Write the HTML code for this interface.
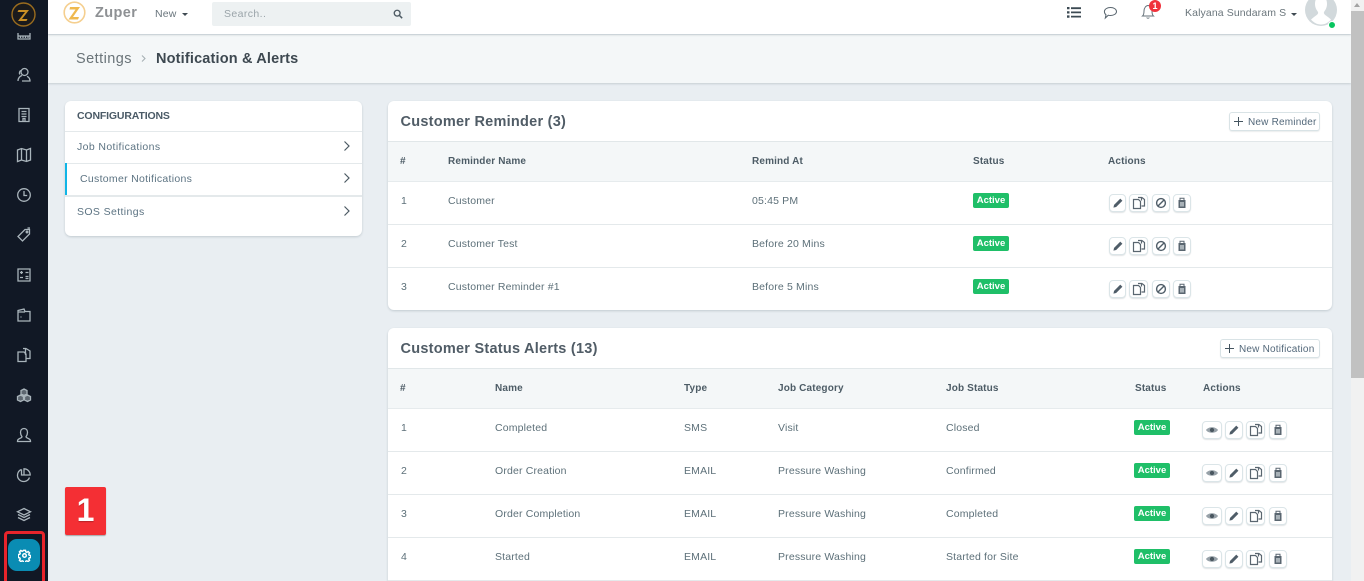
<!DOCTYPE html>
<html lang="en">
<head>
<meta charset="utf-8">
<title>Notification &amp; Alerts</title>
<style>
*{box-sizing:border-box}
html,body{margin:0;padding:0;width:1364px;height:581px;overflow:hidden;background:#e9eef2;font-family:"Liberation Sans",sans-serif}
#root{position:relative;width:1364px;height:581px;overflow:hidden;background:#e9eef2}
.a{position:absolute}
.t{position:absolute;white-space:nowrap;font-size:10.5px;line-height:14px;letter-spacing:.16px;color:#5d7079}
.th{position:absolute;white-space:nowrap;font-size:10px;line-height:14px;letter-spacing:.15px;font-weight:bold;color:#4d5c66}
.card{position:absolute;background:#fff;border-radius:6px;box-shadow:0 1px 2px rgba(60,80,90,.22);overflow:hidden}
.line{position:absolute;height:1px;background:#e4e9eb}
.badge{position:absolute;width:36px;height:15px;background:#1fbf68;border-radius:2px;color:#fff;font-size:9.5px;font-weight:bold;line-height:16px;text-align:center;letter-spacing:0}
.b{position:absolute;height:18px;background:#fff;border:1px solid #dbe5e8;border-radius:4px;box-shadow:0 1px 1px rgba(60,80,90,.15)}
.b svg{position:absolute;left:50%;top:50%;transform:translate(-50%,-50%)}
.side svg{position:absolute;left:16px;width:16px;height:16px;fill:none;stroke:#a9b4bb;stroke-width:1.3}
.nb{position:absolute;background:#fff;border:1px solid #d9e3e6;border-radius:3px;height:19px;color:#53687a;font-size:10px;line-height:19px;letter-spacing:.2px;box-shadow:0 1px 1px rgba(60,80,90,.1)}
</style>
</head>
<body>
<div id="root">
<svg width="0" height="0" style="position:absolute">
<defs>
<symbol id="pen" viewBox="0 0 12 12"><path d="M1 11l.7-3L8.500 1.200l2.300 2.300L4 10.300z" fill="#4f5d68"/></symbol>
<symbol id="copy" viewBox="0 0 14 14"><path d="M1.500 3.500h5l2 2v7h-7zM6 1.500h3.500v3M10 1.500l2.500 2v6.500h-3" fill="none" stroke="#5a6670" stroke-width="1.200"/></symbol>
<symbol id="ban" viewBox="0 0 12 12"><circle cx="6" cy="6" r="4.400" fill="none" stroke="#4f5d68" stroke-width="1.400"/><path d="M3 9l6-6" stroke="#4f5d68" stroke-width="1.400"/></symbol>
<symbol id="trash" viewBox="0 0 12 12"><path d="M2.500 3h7v8h-7z" fill="#5a6670"/><path d="M4 3V1.300h4V3" fill="none" stroke="#5a6670"/><path d="M4 5h4v4.500H4z" fill="#a9b2b8"/></symbol>
<symbol id="eye" viewBox="0 0 14 10"><path d="M.5 5C3 1 11 1 13.500 5 11 9 3 9 .5 5z" fill="#98a2a9"/><circle cx="7" cy="5" r="2.300" fill="#4a5760"/></symbol>
</defs>
</svg>

<!-- content background -->
<div class="a" style="left:48px;top:35px;width:1303px;height:48px;background:#f4f7f8;box-shadow:0 1px 2px rgba(60,80,90,.2)"></div>
<div class="t" style="left:76px;top:50px;font-size:14.500px;line-height:18px;letter-spacing:.45px;color:#6a7479">Settings</div>
<svg class="a" style="left:140px;top:54px" width="7" height="9" viewBox="0 0 7 9"><path d="M2 1.500l3 3-3 3" fill="none" stroke="#a8b0b4" stroke-width="1.100"/></svg>
<div class="t" style="left:156px;top:50px;font-size:14.500px;line-height:18px;letter-spacing:.17px;font-weight:bold;color:#3d4850">Notification &amp; Alerts</div>

<!-- top bar -->
<div class="a" style="left:48px;top:0;width:1303px;height:34px;background:#fff;box-shadow:0 1px 2px rgba(60,80,90,.22)"></div>
<svg class="a" style="left:63px;top:1px" width="24" height="24" viewBox="0 0 24 24"><circle cx="11.500" cy="11.500" r="10.300" fill="#fff" stroke="#f5cf8f" stroke-width="1.600"/><path d="M7 6h10l-7 10h6l-1 2.500H5.500L12.500 8.500H6.500z" fill="#efb94f"/></svg>
<div class="t" style="left:95px;top:3px;font-size:14.500px;line-height:20px;font-weight:bold;letter-spacing:.4px;color:#8e9194">Zuper</div>
<div class="t" style="left:155px;top:7px;font-size:10.500px;color:#69757c">New</div>
<div class="a" style="left:182px;top:13px;width:0;height:0;border:3px solid transparent;border-top:3px solid #3f4a52;border-bottom:0"></div>
<div class="a" style="left:212px;top:2px;width:199px;height:24px;background:#edf1f2;border-radius:2px"></div>
<div class="t" style="left:224px;top:7px;color:#9aa4a9;letter-spacing:.4px">Search..</div>
<svg class="a" style="left:393px;top:9px" width="10" height="10" viewBox="0 0 12 12"><circle cx="5" cy="5" r="3.500" fill="none" stroke="#4d5a63" stroke-width="1.600"/><path d="M7.800 7.800L11 11" stroke="#4d5a63" stroke-width="1.800"/></svg>

<svg class="a" style="left:1067px;top:6px" width="14" height="13" viewBox="0 0 14 13"><path d="M0 1h2.500v2.300H0zM0 5.200h2.500v2.300H0zM0 9.400h2.500v2.300H0zM4 1.300h10v1.800H4zM4 5.500h10v1.800H4zM4 9.700h10v1.800H4z" fill="#3c4a53"/></svg>
<svg class="a" style="left:1103px;top:6px" width="15" height="14" viewBox="0 0 15 14"><path d="M7.500 1.500c3.300 0 6 1.700 6 4s-2.700 4-6 4c-.8 0-1.500-.1-2.200-.3L2.300 12l.7-3.200c-1-.7-1.600-1.900-1.600-3.300 0-2.300 2.800-4 6.100-4z" fill="none" stroke="#58656e" stroke-width="1"/></svg>
<svg class="a" style="left:1141px;top:3px" width="15" height="16" viewBox="0 0 15 16"><path d="M1.500 13c1.200-1 1.500-2 1.500-5C3 5 5 2.500 7 2.500S11 5 11 8c0 3 .3 4 1.500 5zM5.700 14.500c.4 1 2.200 1 2.600 0" fill="none" stroke="#66727a" stroke-width="1"/></svg>
<div class="a" style="left:1149px;top:0;width:12px;height:12px;background:#f0323c;border-radius:50%;color:#fff;font-size:9px;font-weight:bold;line-height:12px;text-align:center">1</div>
<div class="t" style="left:1185px;top:6px;font-size:10.500px;letter-spacing:.11px;color:#6b767c">Kalyana Sundaram S</div>
<div class="a" style="left:1291px;top:13px;width:0;height:0;border:3px solid transparent;border-top:3px solid #3f4a52;border-bottom:0"></div>
<svg class="a" style="left:1305px;top:0" width="33" height="28" viewBox="0 0 33 28"><circle cx="16" cy="10" r="16" fill="#d2d9dc"/><path d="M16 -4c4 0 6 3.500 6 8 0 4-2 6.500-3 8-.6 2 1 3 4 5l3 2.500c-2.500 3-6 5-10 5s-7.500-2-10-5L9 17c3-2 4.600-3 4-5-1-1.500-3-4-3-8 0-4.500 2-8 6-8z" fill="#fff"/></svg>
<div class="a" style="left:1328px;top:21px;width:8px;height:8px;background:#08c55f;border-radius:50%;border:1px solid #fff"></div>

<!-- scrollbar -->
<div class="a" style="left:1351px;top:0;width:13px;height:581px;background:#f1f1f1"></div>
<div class="a" style="left:1351px;top:11px;width:13px;height:367px;background:#c1c1c1"></div>
<div class="a" style="left:1354px;top:3px;width:0;height:0;border:3.500px solid transparent;border-bottom:4px solid #a3a3a3;border-top:0"></div>

<!-- sidebar -->
<div class="a side" style="left:0;top:0;width:48px;height:581px;background:#111825;overflow:hidden">
<svg style="top:26px" viewBox="0 0 16 16"><path d="M2 1h12v12H2zM2 10h12M4.500 12V9.500M7 12V9.500M9.500 12V9.500M12 12V9.500"/></svg>
<svg style="top:67px" viewBox="0 0 16 16"><circle cx="8.500" cy="5" r="3.500"/><path d="M2 14c0-3 2-5 4-5.500M6 14h8c0-2.500-1.500-4-3-4.700M5 3.500C3.500 4 3 6 3.800 7.500"/></svg>
<svg style="top:107px" viewBox="0 0 16 16"><path d="M3 1.500h10v13H3zM5.500 4.500h5M5.500 7h5M5.500 9.500h5M7 14v-2.500h2V14"/></svg>
<svg style="top:147px" viewBox="0 0 16 16"><path d="M1.500 3l4-1.500 5 1.500 4-1.500V13l-4 1.500-5-1.500-4 1.500zM5.500 1.500V13M10.500 3v11.500"/></svg>
<svg style="top:187px" viewBox="0 0 16 16"><circle cx="8" cy="8" r="6.300"/><path d="M8 4v4.500h3.200"/></svg>
<svg style="top:227px" viewBox="0 0 16 16"><path d="M9 2.500h4.500V7l-7 7L2 9.500zM11.500 1l2.500 0"/><circle cx="11" cy="5" r=".8"/></svg>
<svg style="top:267px" viewBox="0 0 16 16"><path d="M2 2h12v12H2zM4 5.500h3M5.500 4v3M9.500 5.500h3M4 10.500h3M9.500 9.500h3M9.500 11.500h3"/></svg>
<svg style="top:307px" viewBox="0 0 16 16"><path d="M2 5V3.500L8 2l1 2.500h5V14H2zM2 5h7M4.500 10h1"/></svg>
<svg style="top:347px" viewBox="0 0 16 16"><path d="M2 5h6l2 2v7.500H2zM7 1.500h2.500V8M10 1.500l4 2.500v7.500h-3.500"/></svg>
<svg style="top:387px" viewBox="0 0 16 16"><path d="M8 2l3 1.500V7L8 8.500 5 7V3.500zM4.500 8L7.500 9.500V13l-3 1.500-3-1.500V9.500zM11.500 8l3 1.500V13l-3 1.500-3-1.500V9.500z" fill="#a9b4bb" fill-opacity=".5"/></svg>
<svg style="top:427px" viewBox="0 0 16 16"><path d="M8 1.500c2.300 0 3.500 1.800 3.500 4 0 2-1 3.500-1.500 4.200 0 1 2 1.500 3.500 2.500.8.500 1 1.300 1 2.300h-13c0-1 .2-1.800 1-2.300C4 11.200 6 10.700 6 9.700 5.500 9 4.500 7.500 4.500 5.500c0-2.200 1.200-4 3.500-4z"/></svg>
<svg style="top:467px" viewBox="0 0 16 16"><path d="M5.500 2.500a6.200 6.200 0 1 0 8 8M8 1.800a6.200 6.200 0 0 1 6.200 6.200H8zM5.500 2.500V8H8"/></svg>
<svg style="top:507px" viewBox="0 0 16 16"><path d="M8 1.500l6.500 3.300L8 8 1.500 4.800zM2 7.500L8 10.500l6-3M2 10.500L8 13.500l6-3"/></svg>
<div class="a" style="left:8px;top:539px;width:32px;height:32px;background:#0a8cb3;border-radius:9px"></div>
<svg style="left:18px;top:549px;width:13px;height:13px;stroke:#fff;stroke-width:1.800" viewBox="0 0 16 16"><circle cx="8" cy="8" r="2.200"/><path d="M6.800 1.700h2.400l.4 1.800 1.300.6 1.600-1 1.700 1.700-1 1.600.6 1.300 1.800.4v2.400l-1.800.4-.6 1.300 1 1.600-1.700 1.700-1.600-1-1.300.6-.4 1.800H6.800l-.4-1.800-1.300-.6-1.600 1-1.700-1.700 1-1.600-.6-1.300-1.800-.4V6.800l1.800-.4.6-1.300-1-1.600 1.700-1.700 1.600 1 1.300-.6z"/></svg>
<div class="a" style="left:0;top:0;width:48px;height:33px;background:#111825"></div>
<svg class="a" style="left:11px;top:2px;width:26px;height:26px;stroke:none" viewBox="0 0 26 26"><circle cx="12.500" cy="12.500" r="11.500" fill="#1a1a1c" stroke="#9a6c1e" stroke-width="1.400"/><path d="M7.500 8h10.500l-7 9h5.500l-1 2H7l7-9H6.500z" fill="#c98f25"/></svg>
</div>

<div class="a" style="left:4px;top:531px;width:41px;height:60px;border:3px solid #e8242b;border-radius:4px"></div>
<div class="a" style="left:65px;top:487px;width:41px;height:48px;background:#f42f34;border-radius:2px;box-shadow:0 1px 1px rgba(0,0,0,.3);color:#fff;font-size:32px;font-weight:bold;line-height:46px;text-align:center;text-shadow:0 1px 1px rgba(0,0,0,.25)">1</div>

<!-- left card -->
<div class="card" style="left:65px;top:101px;width:297px;height:135px">
<div class="t" style="left:12px;top:8px;font-weight:bold;letter-spacing:-.15px;font-size:10.500px;color:#4a5a66">CONFIGURATIONS</div>
<div class="line" style="left:0;top:30px;width:297px"></div>
<div class="t" style="left:12px;top:39px;color:#5c7382;letter-spacing:.38px">Job Notifications</div>
<div class="line" style="left:0;top:62px;width:297px"></div>
<div class="a" style="left:0;top:62px;width:2px;height:33px;background:#10b5e6"></div>
<div class="t" style="left:15px;top:71px;color:#5c7382;letter-spacing:.3px">Customer Notifications</div>
<div class="line" style="left:0;top:94px;width:297px;height:2px"></div>
<div class="t" style="left:12px;top:104px;color:#5c7382;letter-spacing:.38px">SOS Settings</div>
<svg class="a" style="left:278px;top:39px" width="8" height="12" viewBox="0 0 8 12"><path d="M1.500 1.500L6 6l-4.500 4.500" fill="none" stroke="#4c5a63" stroke-width="1.200"/></svg>
<svg class="a" style="left:278px;top:71px" width="8" height="12" viewBox="0 0 8 12"><path d="M1.500 1.500L6 6l-4.500 4.500" fill="none" stroke="#4c5a63" stroke-width="1.200"/></svg>
<svg class="a" style="left:278px;top:104px" width="8" height="12" viewBox="0 0 8 12"><path d="M1.500 1.500L6 6l-4.500 4.500" fill="none" stroke="#4c5a63" stroke-width="1.200"/></svg>
</div>

<!-- card 1 -->
<div class="card" style="left:388px;top:101px;width:944px;height:209px">
<div class="t" style="left:12.500px;top:11px;font-size:14.500px;line-height:20px;font-weight:bold;letter-spacing:.25px;color:#505c66">Customer Reminder (3)</div>
<div class="nb" style="left:841px;top:11px;width:91px;padding-left:18px">New Reminder
<svg class="a" style="left:3px;top:3px" width="11" height="11" viewBox="0 0 11 11"><path d="M5.500 1v9M1 5.500h9" stroke="#44545f" stroke-width="1"/></svg></div>
<div class="a" style="left:0;top:40px;width:944px;height:41px;background:#f4f7f8;border-top:1px solid #e1e7e9;border-bottom:1px solid #e6ebed"></div>
<div class="th" style="left:12px;top:54px">#</div>
<div class="th" style="left:60px;top:54px">Reminder Name</div>
<div class="th" style="left:364px;top:54px">Remind At</div>
<div class="th" style="left:585px;top:54px">Status</div>
<div class="th" style="left:720px;top:54px">Actions</div>

<div class="t" style="left:13px;top:93px">1</div><div class="t" style="left:60px;top:93px">Customer</div><div class="t" style="left:364px;top:93px">05:45 PM</div>
<div class="badge" style="left:585px;top:92px">Active</div>
<div class="line" style="left:0;top:123px;width:944px"></div>
<div class="t" style="left:13px;top:136px">2</div><div class="t" style="left:60px;top:136px">Customer Test</div><div class="t" style="left:364px;top:136px">Before 20 Mins</div>
<div class="badge" style="left:585px;top:135px">Active</div>
<div class="line" style="left:0;top:166px;width:944px"></div>
<div class="t" style="left:13px;top:179px">3</div><div class="t" style="left:60px;top:179px">Customer Reminder #1</div><div class="t" style="left:364px;top:179px">Before 5 Mins</div>
<div class="badge" style="left:585px;top:178px">Active</div>

<div class="b" style="left:721px;top:93px;width:17px"><svg width="11" height="11"><use href="#pen"/></svg></div>
<div class="b" style="left:741px;top:93px;width:19px"><svg width="14" height="14"><use href="#copy"/></svg></div>
<div class="b" style="left:764px;top:93px;width:18px"><svg width="12" height="12"><use href="#ban"/></svg></div>
<div class="b" style="left:785px;top:93px;width:18px"><svg width="12" height="12"><use href="#trash"/></svg></div>
<div class="b" style="left:721px;top:136px;width:17px"><svg width="11" height="11"><use href="#pen"/></svg></div>
<div class="b" style="left:741px;top:136px;width:19px"><svg width="14" height="14"><use href="#copy"/></svg></div>
<div class="b" style="left:764px;top:136px;width:18px"><svg width="12" height="12"><use href="#ban"/></svg></div>
<div class="b" style="left:785px;top:136px;width:18px"><svg width="12" height="12"><use href="#trash"/></svg></div>
<div class="b" style="left:721px;top:179px;width:17px"><svg width="11" height="11"><use href="#pen"/></svg></div>
<div class="b" style="left:741px;top:179px;width:19px"><svg width="14" height="14"><use href="#copy"/></svg></div>
<div class="b" style="left:764px;top:179px;width:18px"><svg width="12" height="12"><use href="#ban"/></svg></div>
<div class="b" style="left:785px;top:179px;width:18px"><svg width="12" height="12"><use href="#trash"/></svg></div>
</div>

<!-- card 2 -->
<div class="card" style="left:388px;top:328px;width:944px;height:270px">
<div class="t" style="left:12.500px;top:11px;font-size:14.500px;line-height:20px;font-weight:bold;letter-spacing:.25px;color:#505c66">Customer Status Alerts (13)</div>
<div class="nb" style="left:832px;top:11px;width:100px;padding-left:18px">New Notification
<svg class="a" style="left:3px;top:3px" width="11" height="11" viewBox="0 0 11 11"><path d="M5.500 1v9M1 5.500h9" stroke="#44545f" stroke-width="1"/></svg></div>
<div class="a" style="left:0;top:40px;width:944px;height:41px;background:#f4f7f8;border-top:1px solid #e1e7e9;border-bottom:1px solid #e6ebed"></div>
<div class="th" style="left:12px;top:54px">#</div>
<div class="th" style="left:107px;top:54px">Name</div>
<div class="th" style="left:296px;top:54px">Type</div>
<div class="th" style="left:390px;top:54px">Job Category</div>
<div class="th" style="left:558px;top:54px">Job Status</div>
<div class="th" style="left:747px;top:54px">Status</div>
<div class="th" style="left:815px;top:54px">Actions</div>

<div class="t" style="left:13px;top:93px">1</div><div class="t" style="left:107px;top:93px">Completed</div><div class="t" style="left:296px;top:93px">SMS</div><div class="t" style="left:390px;top:93px">Visit</div><div class="t" style="left:558px;top:93px">Closed</div>
<div class="badge" style="left:746px;top:92px">Active</div>
<div class="line" style="left:0;top:123px;width:944px"></div>
<div class="t" style="left:13px;top:136px">2</div><div class="t" style="left:107px;top:136px">Order Creation</div><div class="t" style="left:296px;top:136px">EMAIL</div><div class="t" style="left:390px;top:136px">Pressure Washing</div><div class="t" style="left:558px;top:136px">Confirmed</div>
<div class="badge" style="left:746px;top:135px">Active</div>
<div class="line" style="left:0;top:166px;width:944px"></div>
<div class="t" style="left:13px;top:179px">3</div><div class="t" style="left:107px;top:179px">Order Completion</div><div class="t" style="left:296px;top:179px">EMAIL</div><div class="t" style="left:390px;top:179px">Pressure Washing</div><div class="t" style="left:558px;top:179px">Completed</div>
<div class="badge" style="left:746px;top:178px">Active</div>
<div class="line" style="left:0;top:209px;width:944px"></div>
<div class="t" style="left:13px;top:222px">4</div><div class="t" style="left:107px;top:222px">Started</div><div class="t" style="left:296px;top:222px">EMAIL</div><div class="t" style="left:390px;top:222px">Pressure Washing</div><div class="t" style="left:558px;top:222px">Started for Site</div>
<div class="badge" style="left:746px;top:221px">Active</div>
<div class="line" style="left:0;top:252px;width:944px"></div>

<div class="b" style="left:814px;top:93px;width:20px"><svg width="13" height="10"><use href="#eye"/></svg></div>
<div class="b" style="left:837px;top:93px;width:18px"><svg width="11" height="11"><use href="#pen"/></svg></div>
<div class="b" style="left:858px;top:93px;width:19px"><svg width="14" height="14"><use href="#copy"/></svg></div>
<div class="b" style="left:881px;top:93px;width:18px"><svg width="12" height="12"><use href="#trash"/></svg></div>
<div class="b" style="left:814px;top:136px;width:20px"><svg width="13" height="10"><use href="#eye"/></svg></div>
<div class="b" style="left:837px;top:136px;width:18px"><svg width="11" height="11"><use href="#pen"/></svg></div>
<div class="b" style="left:858px;top:136px;width:19px"><svg width="14" height="14"><use href="#copy"/></svg></div>
<div class="b" style="left:881px;top:136px;width:18px"><svg width="12" height="12"><use href="#trash"/></svg></div>
<div class="b" style="left:814px;top:179px;width:20px"><svg width="13" height="10"><use href="#eye"/></svg></div>
<div class="b" style="left:837px;top:179px;width:18px"><svg width="11" height="11"><use href="#pen"/></svg></div>
<div class="b" style="left:858px;top:179px;width:19px"><svg width="14" height="14"><use href="#copy"/></svg></div>
<div class="b" style="left:881px;top:179px;width:18px"><svg width="12" height="12"><use href="#trash"/></svg></div>
<div class="b" style="left:814px;top:222px;width:20px"><svg width="13" height="10"><use href="#eye"/></svg></div>
<div class="b" style="left:837px;top:222px;width:18px"><svg width="11" height="11"><use href="#pen"/></svg></div>
<div class="b" style="left:858px;top:222px;width:19px"><svg width="14" height="14"><use href="#copy"/></svg></div>
<div class="b" style="left:881px;top:222px;width:18px"><svg width="12" height="12"><use href="#trash"/></svg></div>
</div>
</div>
</body>
</html>
